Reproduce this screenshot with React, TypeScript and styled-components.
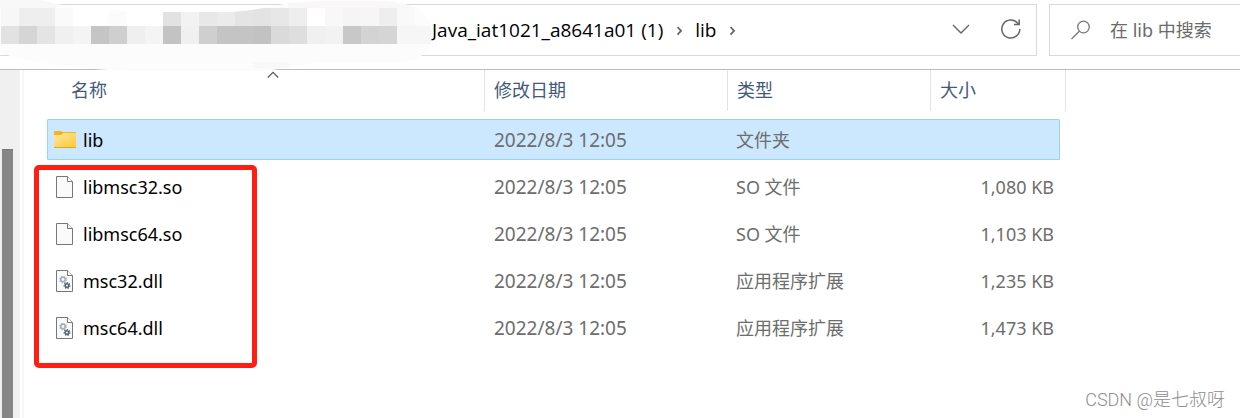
import React from "react";
import styled, { createGlobalStyle } from "styled-components";

const GlobalStyle = createGlobalStyle`
  * { box-sizing: border-box; }
  body {
    margin: 0;
    background: #fff;
    font-family: "Noto Sans", "Noto Sans CJK SC", sans-serif;
    font-size: 18px;
    line-height: 24px;
    color: #000;
  }
`;

const Window = styled.div`
  display: flex;
  flex-direction: column;
  min-height: 100vh;
  overflow: hidden;
`;

const Toolbar = styled.header`
  position: relative;
  display: flex;
  gap: 12px;
  padding: 4px 0 13px;
  border-bottom: 1px solid #bdbdbd;
`;

const AddressBar = styled.div`
  flex: 1;
  min-width: 0;
  height: 52px;
  display: flex;
  align-items: center;
  padding: 0 13px 0 432px;
  border: 1px solid #d9d9d9;
  border-left: 0;
`;

const Breadcrumb = styled.nav`
  flex: 1;
  display: flex;
  align-items: center;
  gap: 12px;
  font-family: "Open Sans", "Noto Sans CJK SC", sans-serif;
  font-size: 19px;
  white-space: nowrap;

  a { color: #000; text-decoration: none; }
`;

const IconButton = styled.button`
  display: flex;
  align-items: center;
  justify-content: center;
  width: 24px;
  height: 24px;
  margin-left: 26px;
  padding: 0;
  border: 0;
  background: none;
  color: #666;
`;

const SearchBox = styled.label`
  display: flex;
  align-items: center;
  gap: 18px;
  width: 191px;
  height: 52px;
  padding-left: 20px;
  border: 1px solid #d9d9d9;
  border-right: 0;
`;

const SearchInput = styled.input`
  flex: 1;
  min-width: 0;
  padding: 0;
  border: 0;
  outline: 0;
  background: none;
  font: inherit;
  &::placeholder { color: #6b6b6b; opacity: 1; }
`;

const Mosaic = styled.svg`
  position: absolute;
  left: 0;
  top: 0;
`;

const Body = styled.div`
  flex: 1;
  display: flex;
`;

const ScrollTrack = styled.div`
  width: 20px;
  padding: 79px 7px 0 2px;
  background: #f0f0f0;
  display: flex;
`;

const ScrollThumb = styled.div`
  flex: 1;
  background: #868686;
  border-top: 1px solid #777;
`;

const Pane = styled.main`
  position: relative;
  flex: 1;
  min-width: 0;
  display: flex;
  flex-direction: column;
  margin-left: 2px;
  border-left: 2px solid #f7f7f7;
`;

const FileTable = styled.table`
  display: block;

  thead, tbody { display: block; }
`;

const HeaderRow = styled.tr`
  display: grid;
  grid-template-columns: minmax(0, 1fr) 243px 203px 135px;
  height: 41px;
  margin: 0 174px 8px 38px;
`;

const HeaderCell = styled.th`
  position: relative;
  padding: 8px 9px;
  border-right: 1px solid #e3e3e3;
  color: #44597a;
  font-weight: 400;
  text-align: left;
`;

const SortMark = styled.svg`
  position: absolute;
  top: 1px;
  left: 50%;
  margin-left: -6px;
`;

const FileRow = styled.tr<{ $selected?: boolean }>`
  display: grid;
  grid-template-columns: minmax(0, 1fr) 242px 203px 129px;
  align-items: center;
  height: 41px;
  margin: 0 180px 6px 23px;
  border: 1px solid ${(p) => (p.$selected ? "#99d1ff" : "transparent")};
  border-radius: 1px;
  background: ${(p) => (p.$selected ? "#cce8ff" : "none")};
`;

const NameCell = styled.td`
  display: flex;
  align-items: center;
  gap: 6px;
  padding: 0 0 0 5px;
`;

const InfoCell = styled.td<{ $kind?: "date" | "size" }>`
  padding: 0 5px 0 9px;
  color: #6d6d6d;
  font-size: ${(p) => (p.$kind === "date" ? 19 : 18)}px;
  text-align: ${(p) => (p.$kind === "size" ? "right" : "left")};
`;

const Highlight = styled.div`
  position: absolute;
  left: 10px;
  top: 95px;
  width: 223px;
  height: 203px;
  border: 5px solid #ff1f12;
  border-radius: 5px;
  pointer-events: none;
`;

const Watermark = styled.footer`
  margin-top: auto;
  padding: 0 15px 6px;
  color: #8e8e8e;
  font-family: Roboto, "Noto Sans CJK SC", sans-serif;
  font-weight: 300;
  text-align: right;
`;

const upperTones: [number, string][] = [
  [1, "#f7f7f7"], [19, "#eeeeee"], [37, "#eeeeee"], [55, "#fafafa"], [109, "#fbfbfb"],
  [163, "#e2e2e2"], [181, "#f2f2f2"], [199, "#e8e8e8"], [217, "#ebebeb"], [235, "#e4e4e4"],
  [253, "#e3e3e3"], [271, "#e7e7e7"], [289, "#eeeeee"], [307, "#ffffff"], [325, "#f8f8f8"],
  [343, "#f5f5f5"], [361, "#f6f6f6"], [379, "#eeeeee"], [397, "#f9f9f9"],
];
const lowerTones = [
  "#e2e2e2", "#d5d5d5", "#e4e4e4", "#f0f0f0", "#f4f4f4", "#c5c5c5", "#cfcfcf", "#efefef",
  "#f4f4f4", "#c3c3c3", "#f0f0f0", "#cfcfcf", "#c4c4c4", "#c4c4c4", "#c2c2c2", "#dadada",
  "#dedede", "#f0f0f0", "#f2f2f2", "#c8c8c8", "#d3d3d3", "#d5d5d5", "#f6f6f6", "#f6f6f6",
];

const BlurredPath = () => (
  <Mosaic width="436" height="74" viewBox="0 0 436 74" aria-hidden="true">
    <defs>
      <clipPath id="smear">
        <path d="M0 0H38C48 1 52 4 64 5L82 8L108 9L128 12H230C248 11 268 8 288 3L320 1H375C395 1 407 4 419 9C430 17 433 30 431 42C428 52 418 62 400 62L330 62C300 63 285 71 250 71H130C100 70 70 67 40 63C20 59 8 56 0 52Z" />
      </clipPath>
    </defs>
    <g clipPath="url(#smear)">
      <rect width="436" height="74" fill="#fcfcfc" />
      <rect x="73" y="7" width="90" height="19" fill="#fff" />
      <rect width="56" height="8" fill="#f8f8f8" />
      <rect x="288" width="132" height="8" fill="#f9f7f7" />
      {upperTones.map(([x, fill]) => (
        <rect key={x} x={x} y="8" width="18" height="18" fill={fill} />
      ))}
      {lowerTones.map((fill, i) => (
        <rect key={i} x={1 + i * 18} y="26" width="18" height="18" fill={fill} />
      ))}
      <rect x="253" y="62" width="36" height="6" fill="#f8f8f8" />
    </g>
  </Mosaic>
);

const Separator = () => (
  <svg width="8" height="12" viewBox="0 0 8 12" fill="none" stroke="#666" strokeWidth="1.8" aria-hidden="true">
    <path d="M2.500 3L6.100 6.800L2.500 10.600" />
  </svg>
);

const FolderIcon = () => (
  <svg width="24" height="24" viewBox="0 0 24 24" aria-hidden="true">
    <defs>
      <linearGradient id="folder" x1="0" y1="0" x2="1" y2="1">
        <stop offset="0" stopColor="#ffe8a1" />
        <stop offset="1" stopColor="#ffc933" />
      </linearGradient>
    </defs>
    <path d="M1 4a1 1 0 0 1 1-1h6l1.500 1H22a1 1 0 0 1 1 1v4H1z" fill="#f5b41c" />
    <path d="M1 7h7.500l1.500-2h13v14H1z" fill="url(#folder)" />
    <path d="M1 19.500h22" stroke="#e2a61b" />
  </svg>
);

const gearBody = (x: number, y: number, r: number, color: string) => (
  <g fill="none" stroke={color}>
    <circle cx={x} cy={y} r={r} strokeWidth="1.600" />
    <circle cx={x} cy={y} r={r + 1.1} strokeWidth="1.200" strokeDasharray="1.300 1.300" />
  </g>
);

const PageIcon = ({ gears }: { gears?: boolean }) => (
  <svg width="24" height="24" viewBox="0 0 24 24" aria-hidden="true">
    <path d="M3.500 1.500H14.500L19.500 6.500V22.500H3.500Z" fill="#fafafa" stroke="#777" />
    <path d="M14.500 1.500V6.500H19.500" fill="#fff" stroke="#777" />
    {gears && gearBody(10, 10.5, 2.2, "#a3adb8")}
    {gears && gearBody(14, 16.5, 1.8, "#59646d")}
  </svg>
);

type FileKind = "folder" | "page" | "library";

const files: { name: string; kind: FileKind; type: string; size: string }[] = [
  { name: "lib", kind: "folder", type: "文件夹", size: "" },
  { name: "libmsc32.so", kind: "page", type: "SO 文件", size: "1,080 KB" },
  { name: "libmsc64.so", kind: "page", type: "SO 文件", size: "1,103 KB" },
  { name: "msc32.dll", kind: "library", type: "应用程序扩展", size: "1,235 KB" },
  { name: "msc64.dll", kind: "library", type: "应用程序扩展", size: "1,473 KB" },
];

export default function App() {
  return (
    <Window>
      <GlobalStyle />
      <Toolbar>
        <AddressBar>
          <Breadcrumb>
            <a href="#parent">Java_iat1021_a8641a01 (1)</a>
            <Separator />
            <a href="#lib">lib</a>
            <Separator />
          </Breadcrumb>
          <IconButton aria-label="展开">
            <svg width="20" height="20" viewBox="0 0 20 20" fill="none" stroke="currentColor" strokeWidth="1.4">
              <path d="M2 5L10 13L18 5" />
            </svg>
          </IconButton>
          <IconButton aria-label="刷新">
            <svg width="22" height="22" viewBox="0 0 22 22" fill="none" stroke="currentColor" strokeWidth="1.5">
              <path d="M19.800 10A9 9 0 1 1 17.500 4L19 5.500" />
              <path d="M19.200 0.500V5.600H14" />
            </svg>
          </IconButton>
        </AddressBar>
        <SearchBox>
          <svg width="22" height="22" viewBox="0 0 22 22" fill="none" stroke="#777" strokeWidth="1.3" aria-hidden="true">
            <circle cx="13.500" cy="8" r="5.800" />
            <path d="M9.300 12.200L1.500 20" />
          </svg>
          <SearchInput placeholder="在 lib 中搜索" aria-label="在 lib 中搜索" />
        </SearchBox>
        <BlurredPath />
      </Toolbar>
      <Body>
        <ScrollTrack>
          <ScrollThumb />
        </ScrollTrack>
        <Pane>
          <FileTable>
            <thead>
              <HeaderRow>
                <HeaderCell>
                  名称
                  <SortMark width="12" height="8" viewBox="0 0 12 8" fill="none" stroke="#555" strokeWidth="1.1">
                    <path d="M0.800 6.500L6 1.300L11.200 6.500" />
                  </SortMark>
                </HeaderCell>
                <HeaderCell>修改日期</HeaderCell>
                <HeaderCell>类型</HeaderCell>
                <HeaderCell>大小</HeaderCell>
              </HeaderRow>
            </thead>
            <tbody>
              {files.map((file) => (
                <FileRow key={file.name} $selected={file.kind === "folder"}>
                  <NameCell>
                    {file.kind === "folder" ? <FolderIcon /> : <PageIcon gears={file.kind === "library"} />}
                    {file.name}
                  </NameCell>
                  <InfoCell $kind="date">2022/8/3 12:05</InfoCell>
                  <InfoCell>{file.type}</InfoCell>
                  <InfoCell $kind="size">{file.size}</InfoCell>
                </FileRow>
              ))}
            </tbody>
          </FileTable>
          <Highlight />
          <Watermark>CSDN @是七叔呀</Watermark>
        </Pane>
      </Body>
    </Window>
  );
}
